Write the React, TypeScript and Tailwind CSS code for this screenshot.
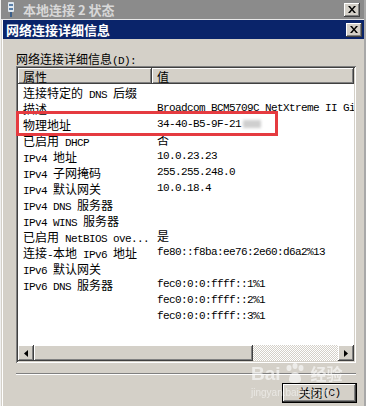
import React from "react";

const rows: [string, string][] = [
  ["连接特定的 DNS 后缀", ""],
  ["描述", "Broadcom BCM5709C NetXtreme II GigE (NDIS VBD Client) #2"],
  ["物理地址", "34-40-B5-9F-21"],
  ["已启用 DHCP", "否"],
  ["IPv4 地址", "10.0.23.23"],
  ["IPv4 子网掩码", "255.255.248.0"],
  ["IPv4 默认网关", "10.0.18.4"],
  ["IPv4 DNS 服务器", ""],
  ["IPv4 WINS 服务器", ""],
  ["已启用 NetBIOS ove...", "是"],
  ["连接-本地 IPv6 地址", "fe80::f8ba:ee76:2e60:d6a2%13"],
  ["IPv6 默认网关", ""],
  ["IPv6 DNS 服务器", "fec0:0:0:ffff::1%1"],
  ["", "fec0:0:0:ffff::2%1"],
  ["", "fec0:0:0:ffff::3%1"],
];

// SimSun-like mix: half width ascii, full width CJK
function Txt({ t }: { t: string }) {
  const parts = t.split(/([\x20-\x7e]+)/).filter(Boolean);
  return (
    <>
      {parts.map((p, i) =>
        /^[\x20-\x7e]+$/.test(p) ? (
          <span key={i} className="font-['Liberation_Mono',monospace] text-[11px] tracking-[-0.6px]">
            {p}
          </span>
        ) : (
          <span key={i} className="font-['Noto_Sans_CJK_SC',sans-serif] text-[12px]">
            {p}
          </span>
        )
      )}
    </>
  );
}

function CloseBtn() {
  return (
    <div className="w-[16px] h-[14px] bg-[#d4d0c8] flex items-center justify-center shadow-[inset_-1px_-1px_#404040,inset_1px_1px_#fff,inset_-2px_-2px_#808080]">
      <svg width="8" height="7" viewBox="0 0 8 7">
        <path d="M0 0h2l2 2.5L6 0h2L5 3.5 8 7H6L4 4.5 2 7H0l3-3.5z" fill="#000" />
      </svg>
    </div>
  );
}

const raised = "shadow-[inset_-1px_-1px_#404040,inset_1px_1px_#fff,inset_-2px_-2px_#808080]";

export default function App() {
  return (
    <div className="relative w-[366px] h-[406px] overflow-hidden bg-[#d4d0c8] flex flex-col border-l border-[#f0f0f0] border-r-2 border-r-[#a8a8a8]">
      {/* outer window title */}
      <div className="h-[19px] bg-[#8b8b8b] flex items-center pl-[6px] pr-[4px] gap-[8px] shrink-0">
        <svg width="8" height="15" viewBox="0 0 8 15">
          <rect x="1" y="0" width="6" height="10" rx="1" fill="#dfe8f0" />
          <rect x="2" y="2" width="4" height="2" fill="#5a7fa8" />
          <rect x="2" y="6" width="4" height="2" fill="#5a7fa8" />
          <rect x="3" y="10" width="2" height="5" fill="#3b5f8a" />
        </svg>
        <span className="flex-1 text-[13px] font-bold text-[#d8d8d8] font-['Noto_Sans_CJK_SC',sans-serif] whitespace-pre leading-[19px]">
          本地连接 2 状态
        </span>
        <CloseBtn />
      </div>
      <div className="h-px bg-[#e8e8e8] shrink-0" />

      {/* inner dialog */}
      <div className="flex-1 flex flex-col ml-px border-l border-white">
        <div className="h-[19px] bg-[#0a246a] flex items-center pl-[3px] pr-[2px] shrink-0">
          <span className="flex-1 text-[13px] font-bold text-white font-['Noto_Sans_CJK_SC',sans-serif] leading-[19px]">
            网络连接详细信息
          </span>
          <CloseBtn />
        </div>

        <div className="flex-1 flex flex-col pl-[13px] pr-[8px] pt-[12px]">
          <div className="h-[15px] leading-[15px] text-black whitespace-pre">
            <Txt t="网络连接详细信息(D):" />
          </div>

          {/* list view */}
          <div className="relative h-[297px] p-[2px] bg-white shadow-[inset_1px_1px_#808080,inset_-1px_-1px_#fff,inset_2px_2px_#404040,inset_-2px_-2px_#d4d0c8] flex flex-col">
            <div className="flex-1 flex flex-col overflow-hidden">
              <div className="h-[16px] flex shrink-0">
                <div className={`w-[134px] bg-[#d4d0c8] pl-[5px] leading-[16px] ${raised}`}>
                  <Txt t="属性" />
                </div>
                <div className={`flex-1 bg-[#d4d0c8] pl-[5px] leading-[16px] ${raised}`}>
                  <Txt t="值" />
                </div>
              </div>
              {rows.map(([k, v], i) => (
                <div key={i} className="h-[16px] flex leading-[16px] whitespace-pre text-black shrink-0">
                  <div className="w-[134px] pl-[5px] overflow-hidden">
                    <Txt t={k} />
                  </div>
                  <div className="flex-1 pl-[5px] overflow-hidden flex items-center">
                    <Txt t={v} />
                    {i === 2 && <div className="ml-[2px] w-[18px] h-[8px] bg-[#cfcfcf] blur-[1.5px]" />}
                  </div>
                </div>
              ))}
            </div>

            {/* horizontal scrollbar */}
            <div className="h-[16px] flex shrink-0">
              <div className={`w-[16px] bg-[#d4d0c8] flex items-center justify-center ${raised}`}>
                <svg width="4" height="7" viewBox="0 0 4 7">
                  <path d="M4 0v7L0 3.5z" fill="#000" />
                </svg>
              </div>
              <div className={`w-[219px] bg-[#d4d0c8] ${raised}`} />
              <div className="flex-1 bg-[repeating-conic-gradient(#d4d0c8_0_25%,#ffffff_0_50%)] bg-[length:2px_2px]" />
              <div className={`w-[16px] bg-[#d4d0c8] flex items-center justify-center ${raised}`}>
                <svg width="4" height="7" viewBox="0 0 4 7">
                  <path d="M0 0v7L4 3.5z" fill="#000" />
                </svg>
              </div>
            </div>

            {/* red highlight */}
            <div className="absolute left-[0px] top-[45px] w-[262px] h-[25px] border-[3px] border-[#e53b40]" />
          </div>

          <div className="mt-[10px] border-t border-[#808080] border-b border-b-white" />

          <button className="mt-[8px] self-end -mr-px w-[75px] h-[20px] border border-black bg-[#d4d0c8] p-0">
            <div className={`w-full h-full flex items-center justify-center leading-none ${raised}`}>
              <Txt t="关闭(C)" />
            </div>
          </button>
        </div>
      </div>

      {/* watermark */}
      <div className="absolute left-[250px] top-[363px] flex items-center gap-[2px] text-white opacity-60 pointer-events-none">
        <span className="text-[19px] font-bold font-['Liberation_Sans',sans-serif] leading-none">Bai</span>
        <svg width="26" height="20" viewBox="0 0 26 20">
          <ellipse cx="6" cy="5" rx="2.5" ry="3" fill="#fff" />
          <ellipse cx="12" cy="3" rx="2.5" ry="3" fill="#fff" />
          <ellipse cx="18" cy="5" rx="2.5" ry="3" fill="#fff" />
          <path d="M6 17c0-5 3-8 6-8s6 3 6 8c0 2-2 3-6 3s-6-1-6-3z" fill="#fff" />
        </svg>
        <span className="text-[16px] font-bold font-['Noto_Sans_CJK_SC',sans-serif] leading-none">经验</span>
      </div>
      <div className="absolute left-[250px] top-[385px] text-[10px] text-white opacity-50 font-['Liberation_Sans',sans-serif] pointer-events-none">
        jingyan.baidu.com
      </div>
    </div>
  );
}
